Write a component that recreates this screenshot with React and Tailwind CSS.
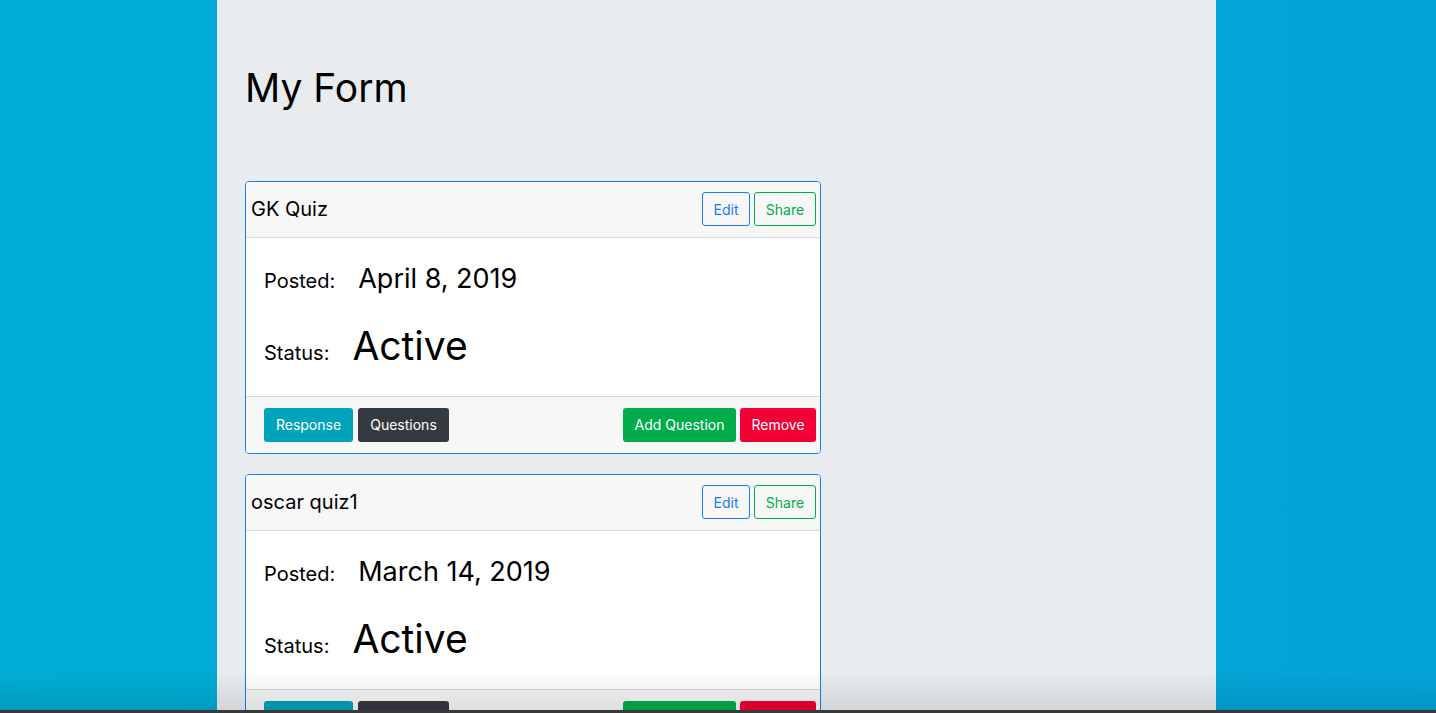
const forms = [
  { title: "GK Quiz", posted: "April 8, 2019", status: "Active" },
  { title: "oscar quiz1", posted: "March 14, 2019", status: "Active" },
];

function FormCard({ form }) {
  return (
    <div className="mb-[20px] w-[576px] overflow-hidden rounded-[4px] border border-[#1a7bf2] bg-white">
      <div className="flex h-[56px] items-center justify-between border-b border-[#d9d9d9] bg-[#f7f7f7] pl-[5px] pr-[4px]">
        <span className="text-[20px] text-black">{form.title}</span>
        <div className="flex gap-[4px]">
          <button className="h-[34px] w-[48px] rounded-[3px] border border-[#1a7bf2] text-[14px] text-[#1a7bf2]">
            Edit
          </button>
          <button className="h-[34px] w-[62px] rounded-[3px] border border-[#00ad4a] text-[14px] text-[#00ad4a]">
            Share
          </button>
        </div>
      </div>
      <div className="h-[158px] px-[18px] pt-[25px]">
        <div className="flex items-baseline leading-[1.2]">
          <span className="text-[20px]">Posted:</span>
          <span className="ml-[23px] text-[27px]">{form.posted}</span>
        </div>
        <div className="mt-[28px] flex items-baseline leading-[1.2]">
          <span className="text-[20px]">Status:</span>
          <span className="ml-[23px] text-[39px]">{form.status}</span>
        </div>
      </div>
      <div className="flex h-[57px] items-center justify-between border-t border-[#d9d9d9] bg-[#f7f7f7] pl-[18px] pr-[4px]">
        <div className="flex gap-[5px]">
          <button className="h-[34px] w-[89px] rounded-[3px] bg-[#00a3b9] text-[14px] text-white">Response</button>
          <button className="h-[34px] w-[91px] rounded-[3px] bg-[#343a40] text-[14px] text-white">Questions</button>
        </div>
        <div className="flex gap-[4px]">
          <button className="h-[34px] w-[113px] rounded-[3px] bg-[#00ad4a] text-[14px] text-white">Add Question</button>
          <button className="h-[34px] w-[76px] rounded-[3px] bg-[#f00034] text-[14px] text-white">Remove</button>
        </div>
      </div>
    </div>
  );
}

export default function App() {
  return (
    <div
      className="relative flex h-[713px] justify-center overflow-hidden bg-gradient-to-r from-[#00aed5] to-[#03a4d8] text-black"
      style={{ fontFamily: "Inter, 'Noto Sans', sans-serif" }}
    >
      <div className="ml-[-3px] w-[999px] bg-[#e9ecef] px-[28px] pt-[65px]">
        <h1 className="text-[39px] leading-[1.2]">My Form</h1>
        <div className="mt-[69px]">
          {forms.map((f) => (
            <FormCard key={f.title} form={f} />
          ))}
        </div>
      </div>
      <div className="pointer-events-none absolute bottom-[3px] left-0 right-0 h-[40px] bg-gradient-to-b from-transparent to-black/10" />
      <div className="absolute bottom-0 left-0 right-0 h-[3px] bg-[#3a3a3a]" />
    </div>
  );
}
